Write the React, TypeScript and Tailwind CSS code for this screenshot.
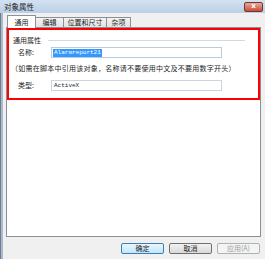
export default function App() {
  const tabs = [
    { label: "编辑", w: "w-[29px]" },
    { label: "位置和尺寸", w: "w-[44px]" },
    { label: "杂项", w: "w-[25px]" },
  ];

  return (
    <div className="relative w-[265px] h-[259px] bg-[#f0f0f0] flex flex-col overflow-hidden font-['Noto_Sans_CJK_SC','Noto_Sans',sans-serif] text-[7px] leading-none text-[#1e1e1e]">
      {/* title bar */}
      <div className="h-[13px] shrink-0 flex items-center justify-between pl-[4px] pr-[2px] bg-gradient-to-b from-[#d3e2f2] to-[#bccfe6]">
        <span className="text-[7.5px] text-[#222]">对象属性</span>
        <div className="w-[19px] h-[10px] rounded-[2px] border border-[#7d3327] bg-gradient-to-b from-[#e9a99c] to-[#c24d3b] flex items-center justify-center text-white text-[7px] font-bold font-['DejaVu_Sans',sans-serif]">
          x
        </div>
      </div>

      <div className="flex-1 flex">
        {/* window frame */}
        <div className="w-[3px] shrink-0 border-l border-[#6f7c8c] bg-[#a8bace]" />

        <div className="flex-1 flex flex-col pl-[3px] pr-[4px]">
          {/* tabs */}
          <div className="h-[14px] shrink-0 flex items-end pl-[1px]">
            <div className="w-[29px] h-[13px] -mb-[1px] z-10 bg-white border border-b-0 border-[#8c8f96] flex items-center justify-center">
              通用
            </div>
            {tabs.map((t) => (
              <div
                key={t.label}
                className={`${t.w} h-[10px] bg-gradient-to-b from-[#f3f3f3] to-[#e3e3e3] border border-b-0 border-[#8c8f96] -ml-px first:ml-0 flex items-center justify-center`}
              >
                {t.label}
              </div>
            ))}
          </div>

          {/* tab panel */}
          <div className="h-[210px] shrink-0 bg-white border border-[#8c8f96] pl-[6px] flex flex-col">
            <div className="h-[10px] mt-[7px] flex items-center">
              <span>通用属性</span>
              <div className="ml-[7px] w-[197px] h-px bg-[#d5d9de]" />
            </div>

            <div className="h-[11px] mt-[2px] flex items-center">
              <span className="w-[33px] pl-[5px]">名称:</span>
              <div className="ml-[5px] w-[171px] h-full border border-[#bccbdc] bg-white flex items-center pl-px">
                <span className="h-[8px] px-px bg-[#3399ff] text-white font-['Liberation_Mono',monospace] text-[6px] flex items-center">
                  Alarmreport21
                </span>
              </div>
            </div>

            <div className="h-[10px] mt-[5px] flex items-center -ml-[2px] tracking-[0.25px]">
              （如需在脚本中引用该对象，名称请不要使用中文及不要用数字开头）
            </div>

            <div className="h-[11px] mt-[7px] flex items-center">
              <span className="w-[33px] pl-[5px]">类型:</span>
              <div className="ml-[5px] w-[171px] h-full border border-[#c9d5e2] bg-white flex items-center pl-[2px] font-['Liberation_Mono',monospace] text-[6px]">
                ActiveX
              </div>
            </div>
          </div>

          {/* buttons */}
          <div className="mt-[6px] flex justify-end gap-[5px] pr-px">
            <button className="w-[43px] h-[11px] rounded-[2px] border border-[#3c7fb1] bg-gradient-to-b from-[#eaf6fd] to-[#bee6fd] flex items-center justify-center text-[7px] leading-none">
              确定
            </button>
            <button className="w-[43px] h-[11px] rounded-[2px] border border-[#707070] bg-gradient-to-b from-[#f2f2f2] to-[#d9d9d9] flex items-center justify-center text-[7px] leading-none">
              取消
            </button>
            <button className="w-[43px] h-[11px] rounded-[2px] border border-[#adb2b5] bg-[#f4f4f4] flex items-center justify-center text-[7px] leading-none text-[#a0a0a0]">
              应用(A)
            </button>
          </div>
        </div>
      </div>

      {/* red annotation box */}
      <div className="absolute left-[7px] top-[28px] w-[253px] h-[72px] border-2 border-[#ff0000] pointer-events-none" />
    </div>
  );
}
